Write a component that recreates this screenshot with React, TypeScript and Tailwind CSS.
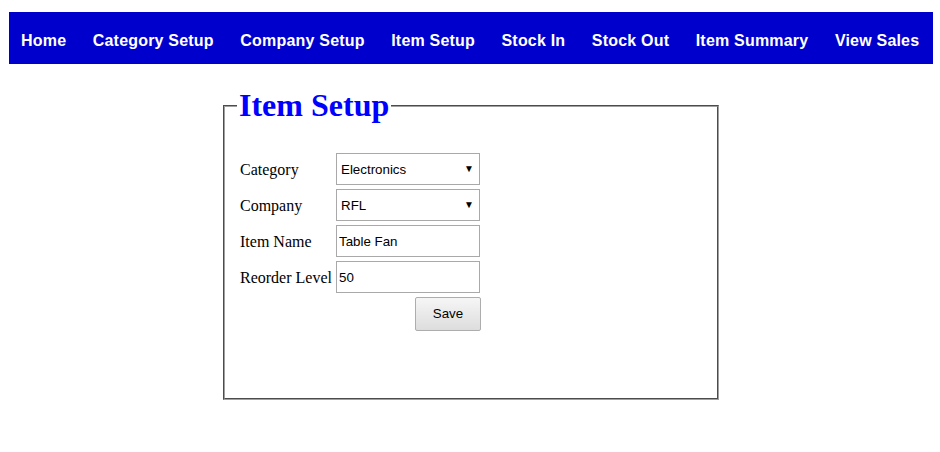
import React, { useState } from 'react';

const links = ['Home', 'Category Setup', 'Company Setup', 'Item Setup', 'Stock In', 'Stock Out', 'Item Summary', 'View Sales'];

const App = () => {
    const [data, setData] = useState({ category: 'Electronics', company: 'RFL', name: 'Table Fan', reorder: '50' });

    const handleChange = (event: React.ChangeEvent<HTMLInputElement | HTMLSelectElement>) => {
        setData({ ...data, [event.target.name]: event.target.value });
    };

    const fieldClass = "h-[32px] w-[144px] border border-[#a9a9a9] bg-white text-[13.33px] text-black font-['Liberation_Sans',Arial,sans-serif] outline-none pt-[1px]";

    return (
        <div className="min-h-[452px] bg-white pt-[12px] font-['Liberation_Serif',serif]">
            <nav className="ml-[9px] w-[924px] h-[52px] bg-[#0000cc] flex items-center pl-[12px] pt-[6px]">
                <ul className="flex items-center gap-[26.5px]">
                    {links.map((l) => (
                        <li key={l}>
                            <a href="#" className="text-white font-bold text-[16px] font-['Comic_Sans_MS','Liberation_Sans',sans-serif] tracking-[0.2px]">
                                {l}
                            </a>
                        </li>
                    ))}
                </ul>
            </nav>

            <fieldset className="ml-[223px] mt-[23px] w-[496px] h-[313px] border-2 [border-style:groove] border-[#a0a0a0] px-[15px]">
                <legend className="-ml-[3px] px-[2px] text-[32px] leading-[37px] font-bold text-[#0000ff]">Item Setup</legend>

                <div className="mt-[29px] grid grid-cols-[96px_144px] gap-y-[4px] items-center text-[16px] text-black">
                    <label className="pt-[1px]">Category</label>
                    <div className="relative">
                        <select name="category" value={data.category} onChange={handleChange} className={fieldClass + ' appearance-none pl-[4px]'}>
                            <option>Electronics</option>
                            <option>Furniture</option>
                        </select>
                        <span className="pointer-events-none absolute right-[6px] top-[8px] text-[10px] text-black">▼</span>
                    </div>

                    <label className="pt-[1px]">Company</label>
                    <div className="relative">
                        <select name="company" value={data.company} onChange={handleChange} className={fieldClass + ' appearance-none pl-[4px]'}>
                            <option>RFL</option>
                            <option>Walton</option>
                        </select>
                        <span className="pointer-events-none absolute right-[6px] top-[8px] text-[10px] text-black">▼</span>
                    </div>

                    <label className="pt-[1px]">Item Name</label>
                    <input name="name" type="text" value={data.name} onChange={handleChange} className={fieldClass + ' pl-[2px]'} />

                    <label className="pt-[1px]">Reorder Level</label>
                    <input name="reorder" type="text" value={data.reorder} onChange={handleChange} className={fieldClass + ' pl-[2px]'} />

                    <div />
                    <div className="flex justify-end">
                        <button className="mr-[-1px] h-[34px] w-[66px] rounded-[2px] border border-[#adadad] bg-gradient-to-b from-[#f6f6f6] to-[#dddddd] text-[13.33px] text-black font-['Liberation_Sans',Arial,sans-serif]">
                            Save
                        </button>
                    </div>
                </div>
            </fieldset>
        </div>
    );
};

export default App;
